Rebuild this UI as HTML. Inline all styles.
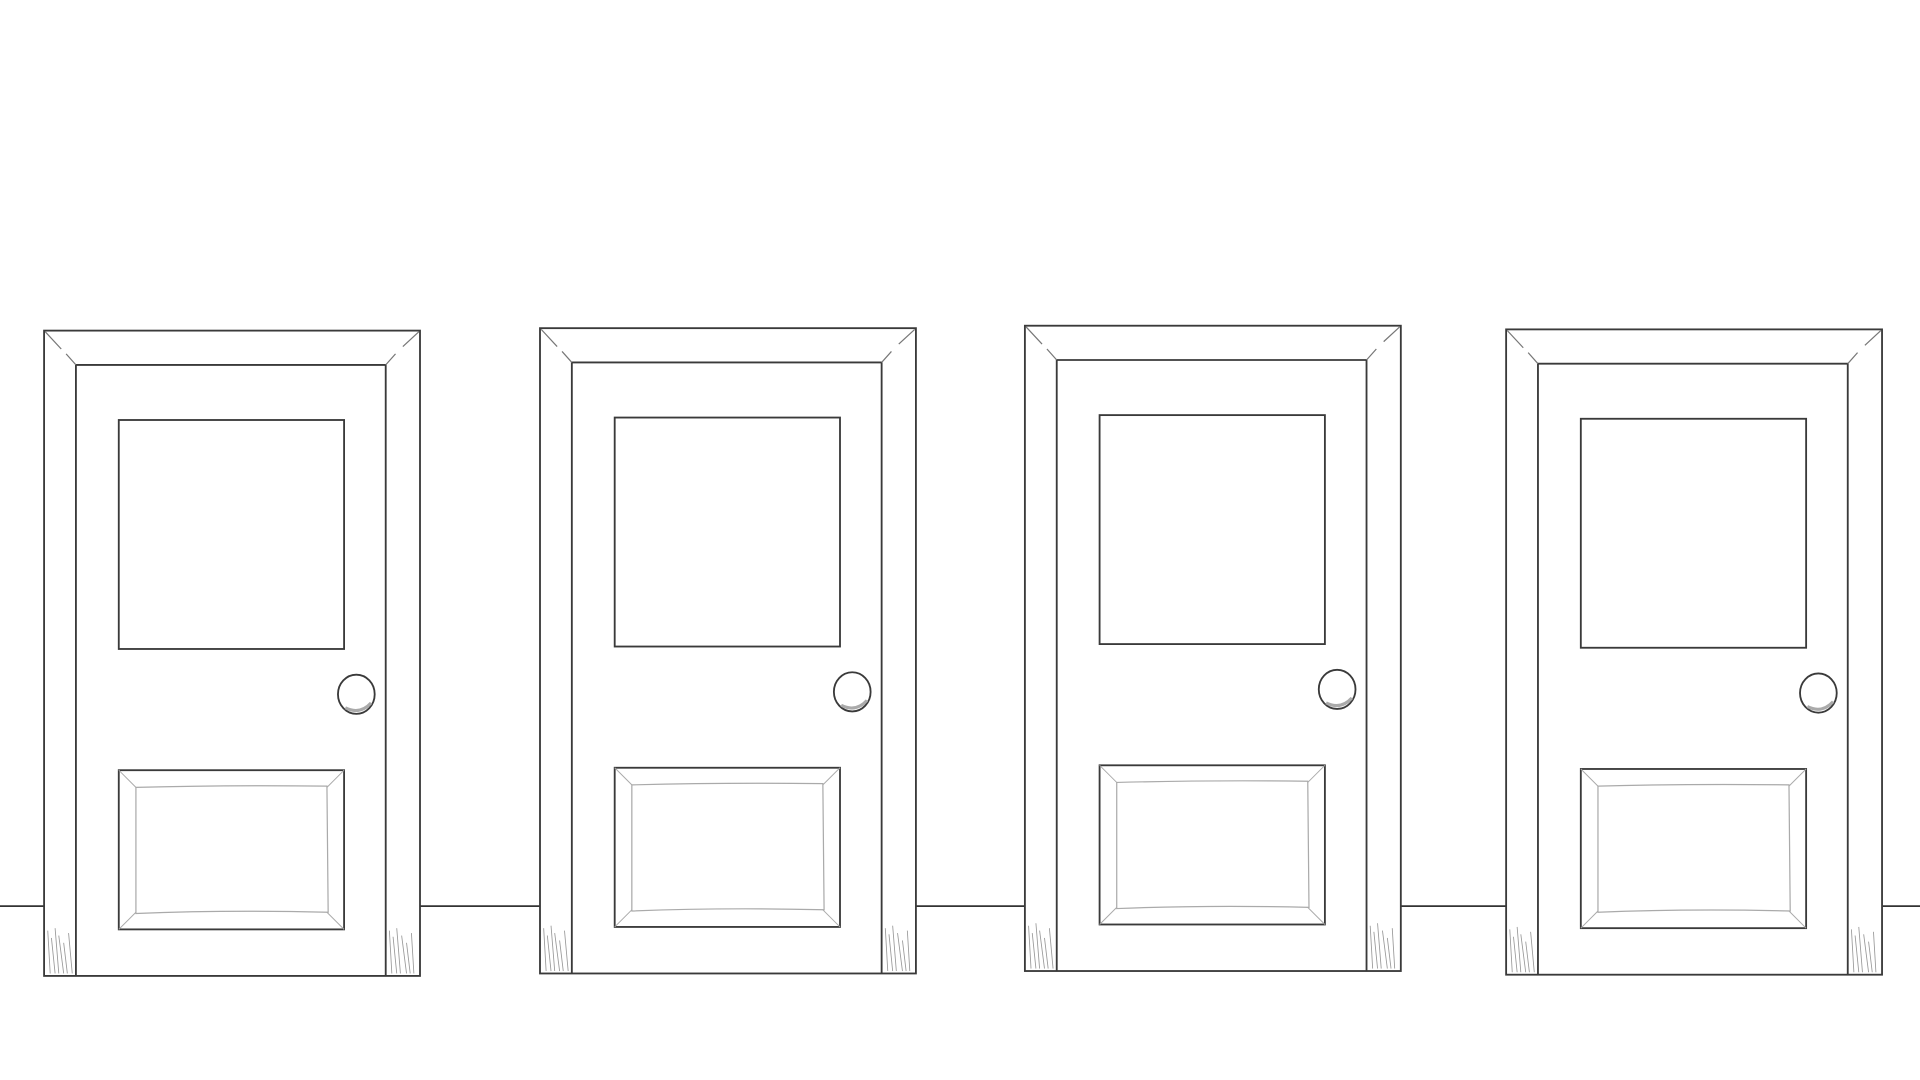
<!DOCTYPE html>
<html><head><meta charset="utf-8"><style>
html,body{margin:0;padding:0;background:#fff;width:1920px;height:1080px;overflow:hidden}
svg{display:block}
</style></head><body>
<svg width="1920" height="1080" viewBox="0 0 1568 882" preserveAspectRatio="none" xmlns="http://www.w3.org/2000/svg">
<defs>
<symbol id="door" overflow="visible">
 <g fill="none" stroke="#3a3a3a" stroke-width="1.5">
  <rect x="0" y="0" width="307" height="527" fill="#fff"/>
  <path d="M26 527 V28 H279 V527"/>
  <path d="M1 1 L14 15 M18 19 L26 28 M306 1 L293 13 M287 19 L279 28" stroke="#777" stroke-width="1"/>
  <rect x="61" y="73" width="184" height="187"/>
  <rect x="61" y="359" width="184" height="130"/>
  <path d="M75 373 Q150 371 231 372 L232 475 Q150 473 75 476 Z" stroke="#aaa" stroke-width="1"/>
  <path d="M61 359 L75 373 M245 359 L231 373 M61 489 L75 475 M245 489 L231 475" stroke="#aaa" stroke-width="0.8"/>
  <ellipse cx="255" cy="297" rx="15" ry="16" fill="#fff"/>
  <path d="M246 308 Q258 314 267 304" stroke="#aaa" stroke-width="2.5"/>
  <path d="M3 490 l2 35 M6 496 l3 29 M9 488 l3 37 M12 494 l4 31 M16 500 l3 25 M20 492 l3 33 M282 490 l2 35 M285 495 l3 30 M288 488 l3 37 M292 494 l4 31 M296 500 l3 25 M300 492 l2 33" stroke="#999" stroke-width="0.7"/>
 </g>
</symbol>
</defs>
<path d="M0 740 H36 M343 740 H441 M748 740 H837 M1144 740 H1230 M1537 740 H1568" stroke="#333" stroke-width="1.4"/>
<use href="#door" x="36" y="270"/>
<use href="#door" x="441" y="268"/>
<use href="#door" x="837" y="266"/>
<use href="#door" x="1230" y="269"/>
</svg>
</body></html>
